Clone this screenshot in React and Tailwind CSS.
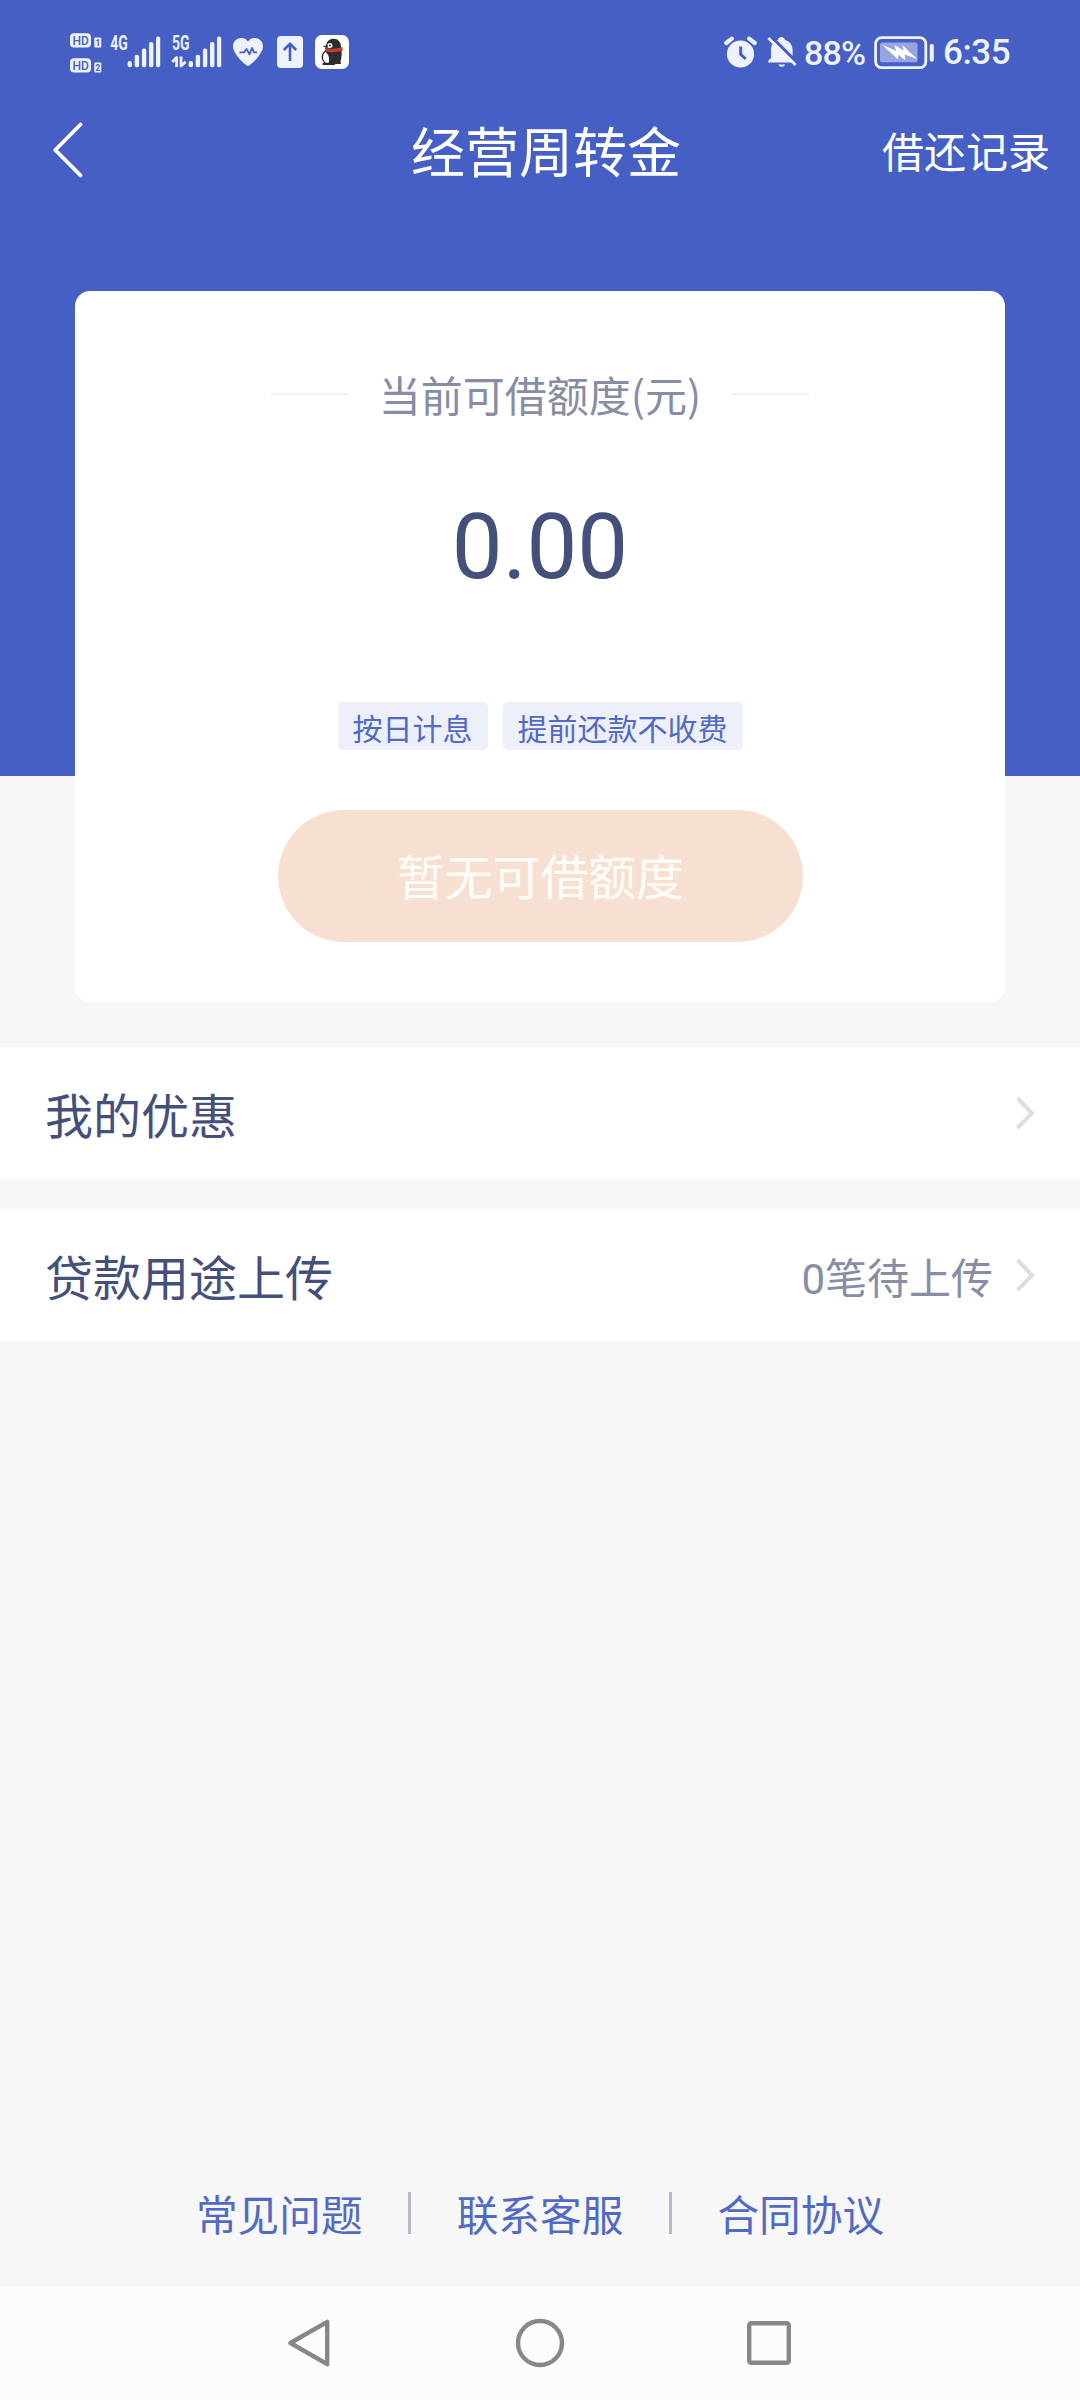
import React from "react";

const cjk = "font-['Noto_Sans_CJK_SC','Roboto',sans-serif]";

function HdBadge({ sim }) {
  return (
    <svg className="overflow-visible" width="32" height="15" viewBox="0 0 32 15">
      <rect x="0" y="0.3" width="21" height="14.2" rx="4" fill="#eef2ff" />
      <text x="2.4" y="12.2" fontFamily="Roboto" fontWeight="500" fontSize="13.6" textLength="16.4" lengthAdjust="spacingAndGlyphs" fill="#465fc4">HD</text>
      <rect x="24.3" y="4.6" width="7" height="9.9" rx="1" fill="#eef2ff" />
      <text x="25.4" y="12.9" fontFamily="Roboto" fontWeight="700" fontSize="9.5" textLength="4.8" lengthAdjust="spacingAndGlyphs" fill="#465fc4">{sim}</text>
    </svg>
  );
}

function Signal({ label, arrows }) {
  return (
    <svg className={arrows ? "ml-[11px] overflow-visible" : "ml-[8px] overflow-visible"} width="50" height="32" viewBox="0 0 50 32">
      <text x={arrows ? 1 : 0.3} y="14.4" fontFamily="Roboto" fontWeight="700" fontSize="19.5" textLength="17.5" lengthAdjust="spacingAndGlyphs" fill="#eef2ff">{label}</text>
      <g fill="#eef2ff">
        <rect x="17.6" y="25" width="4.4" height="6.3" rx="2" />
        <rect x="24.7" y="18.7" width="4.4" height="12.6" rx="2" />
        <rect x="31.9" y="12.4" width="4.4" height="18.9" rx="2" />
        <rect x="39" y="6" width="4.4" height="25.3" rx="2" />
        <rect x="46" y="0.6" width="4.2" height="30.7" rx="2" />
      </g>
      {arrows && (
        <path d="M1.3 26 L5.6 21.5 V31 M10 20.5 V30 L14.6 25.8" fill="none" stroke="#eef2ff" strokeWidth="2.8" strokeLinejoin="round" />
      )}
    </svg>
  );
}

function StatusBar() {
  return (
    <div className="flex h-[105px] items-start justify-between pl-[70px] pr-[70px] pt-[33px]">
      <div className="flex items-start">
        <div className="flex flex-col gap-[10px]">
          <HdBadge sim="1" />
          <HdBadge sim="2" />
        </div>
        <div className="flex items-start pt-[3px]">
          <Signal label="4G" />
          <Signal label="5G" arrows />
          <svg className="ml-[11px] mt-[1px]" width="32" height="30" viewBox="0 0 32 30">
            <path d="M16 29 C14 29 1 17 1 9.5 C1 0.5 12 -1.5 16 4.5 C20 -1.5 31 0.5 31 9.5 C31 17 18 29 16 29Z" fill="#eef2ff" />
            <path d="M7.5 15.3 H12.2 L14.5 12 L17.5 17.3 L20 11 L22 15.3 H25" fill="none" stroke="#465fc4" strokeWidth="1.8" strokeLinejoin="round" />
          </svg>
          <svg className="ml-[13px]" width="26" height="32" viewBox="0 0 26 32">
            <rect width="26" height="32" rx="4" fill="#eef2ff" />
            <path d="M13 25 V8.5 M6.8 14 L13 7.8 L19.2 14" fill="none" stroke="#465fc4" strokeWidth="2.6" />
          </svg>
          <svg className="ml-[12px] -mt-[1px]" width="34" height="34" viewBox="0 0 34 34">
            <rect width="34" height="34" rx="7" fill="#fff" />
            <path d="M11 11 C11.5 6 15 3.8 18.5 3.8 C23 3.8 26 7 26 12 C27 17 27 22 25.5 26.5 L26 29 H20.5 L19.5 30 H7.5 V28.5 L9 27.5 C5.5 24 6 19 10 15.5Z" fill="#2d2c30" />
            <path d="M10.3 17 C13 18.5 15.2 23 13.5 28 L10.5 27.5 C7.2 25 7.2 20 10.3 17Z" fill="#fff" />
            <path d="M11.5 12.5 C11.5 8.5 14.5 7 16.5 8.5 C18.5 10.5 17.5 12.8 15 13Z" fill="#fff" />
            <circle cx="14.8" cy="10.4" r="1" fill="#2d2c30" />
            <path d="M13 10 L7.7 11.3 L12.5 13Z" fill="#2d2c30" />
            <path d="M10 12.8 C16 14.3 22 13.6 27.3 12 L27.8 15.8 C22 17.3 16 17.6 10.5 16.6Z" fill="#c2402f" />
          </svg>
        </div>
      </div>

      <div className="flex items-start pt-[3px] text-[#eef2ff]">
        <svg width="33" height="32" viewBox="0 0 33 32">
          <circle cx="16.5" cy="18" r="13.6" fill="#eef2ff" />
          <path d="M2.3 7 L7.8 2.6 M30.7 7 L25.2 2.6" stroke="#eef2ff" strokeWidth="4.2" strokeLinecap="round" />
          <path d="M16.7 10.5 V18.3 L21.8 23" fill="none" stroke="#465fc4" strokeWidth="3" />
        </svg>
        <svg className="ml-[9px]" width="31" height="32" viewBox="0 0 31 32">
          <path d="M2.2 26.5 V24.8 L5 22 V14 C5 8 8.5 5 12 3.8 C12.2 0.1 18.6 0.1 18.8 3.8 C23.5 5.4 26.6 9 26.6 14 V22 L28.4 24.8 V26.5Z" fill="#eef2ff" />
          <path d="M12.4 28.6 H19 C18.5 31.6 13 31.6 12.4 28.6Z" fill="#eef2ff" />
          <path d="M5 0.5 L32 27.5" stroke="#465fc4" strokeWidth="3.2" />
          <path d="M0 0 H5 L2.4 3 L6.5 7 L2 14Z" fill="#465fc4" />
          <path d="M2.4 2 L29.6 29" stroke="#eef2ff" strokeWidth="2.8" />
        </svg>
        <span className="ml-[7px] w-[64px] whitespace-nowrap font-['Roboto',sans-serif] text-[34px] font-medium leading-[34px] tracking-[-0.8px]">88%</span>
        <svg className="ml-[6px]" width="61" height="34" viewBox="0 0 61 34">
          <rect x="1.6" y="1.7" width="50.2" height="30" rx="6" fill="none" stroke="#eef2ff" strokeWidth="2.8" />
          <rect x="6" y="6.6" width="37.5" height="19.6" rx="2" fill="#98a5e2" />
          <path d="M8 8.5 L22 15 L20.5 9 L29.5 14.5 L28.5 9 L35.5 16 L43.5 23 L30.5 18.5 L31.5 24.5 L24.5 18.8 L24 23.5Z" fill="#fff" />
          <rect x="55.8" y="8" width="4" height="17.5" rx="1.6" fill="#eef2ff" />
        </svg>
        <span className="ml-[8px] w-[67px] whitespace-nowrap font-['Roboto',sans-serif] text-[35px] font-medium leading-[34px] tracking-[-0.4px]">6:35</span>
      </div>
    </div>
  );
}

function NavBar() {
  return (
    <div className="grid h-[90px] grid-cols-[300px_1fr_300px] items-center text-white">
      <svg className="ml-[52px]" width="32" height="56" viewBox="0 0 32 56">
        <path d="M28.5 2.5 L3.3 28 L28.5 53.3" fill="none" stroke="currentColor" strokeWidth="3.8" strokeLinecap="round" strokeLinejoin="round" />
      </svg>
      <h1 className="pl-[12px] text-center text-[54px] font-normal leading-[88px]">经营周转金</h1>
      <span className="pr-[30px] text-right text-[42px] leading-[88px]">借还记录</span>
    </div>
  );
}

function Chip({ children }) {
  return (
    <span className="h-[48px] rounded-[5px] bg-[#edf0fb] px-[15px] text-[30px] leading-[50px] text-[#526ac4]">{children}</span>
  );
}

function QuotaCard() {
  return (
    <section className="mx-[75px] mt-[96px] flex h-[711px] flex-col items-center rounded-[15px] bg-white">
      <div className="mt-[72px] flex h-[62px] items-center justify-center gap-[30px]">
        <i className="h-[2px] w-[78px] bg-[#f2f2f4]" />
        <span className="text-[42px] leading-[62px] text-[#868da5]">当前可借额度(元)</span>
        <i className="h-[2px] w-[78px] bg-[#f2f2f4]" />
      </div>
      <div className="mt-[69px] h-[106px] font-['Roboto',sans-serif] text-[90.5px] leading-[106px] text-[#444f7c]">0.00</div>
      <div className="mt-[102px] flex gap-[15px]">
        <Chip>按日计息</Chip>
        <Chip>提前还款不收费</Chip>
      </div>
      <button className="mt-[60px] h-[132px] w-[525px] rounded-full bg-[#f7e0d2] pb-[2px] pl-[1px] text-[47.8px] leading-[130px] text-[#fffdf9]">暂无可借额度</button>
    </section>
  );
}

function Row({ title, value }) {
  return (
    <div className="flex h-[132px] items-center bg-white pl-[45px] pr-[44px]">
      <span className="flex-1 text-[48px] leading-[132px] text-[#444f7c]">{title}</span>
      {value && <span className="pt-[10px] font-['Roboto','Noto_Sans_CJK_SC',sans-serif] text-[42px] leading-[122px] text-[#868da5]">{value}</span>}
      <svg className="ml-[22px]" width="21" height="34" viewBox="0 0 21 34">
        <path d="M2.5 2 L17 17.3 L2.5 32" fill="none" stroke="#dcdde3" strokeWidth="4" />
      </svg>
    </div>
  );
}

function FooterLinks() {
  return (
    <div className="flex h-[62px] items-center justify-center text-[41.7px] leading-[62px] text-[#526ac4]">
      <span>常见问题</span>
      <i className="mx-[45.5px] h-[42px] w-[3px] bg-[#b3b8cb]" />
      <span>联系客服</span>
      <i className="mx-[45.5px] h-[42px] w-[3px] bg-[#b3b8cb]" />
      <span>合同协议</span>
    </div>
  );
}

function SystemNav() {
  return (
    <div className="flex h-[114px] items-center justify-center bg-[#fcfcfc]">
      <div className="flex items-center pb-[1px] pr-[3px]">
        <svg width="44" height="50" viewBox="0 0 44 50">
          <path d="M40.2 3.8 V46.2 L3.4 25Z" fill="none" stroke="#878787" strokeWidth="4.4" strokeLinejoin="round" />
        </svg>
        <svg className="ml-[184px]" width="50" height="50" viewBox="0 0 50 50">
          <circle cx="25" cy="25" r="22" fill="none" stroke="#878787" strokeWidth="4.4" />
        </svg>
        <svg className="ml-[182px]" width="44" height="44" viewBox="0 0 44 44">
          <rect x="2.2" y="2.2" width="39.6" height="39.6" rx="2.2" fill="none" stroke="#878787" strokeWidth="4.4" />
        </svg>
      </div>
    </div>
  );
}

export default function App() {
  return (
    <div className={`${cjk} flex h-[2400px] w-[1080px] flex-col overflow-hidden bg-[#f7f7f7]`}>
      <div className="h-[776px] shrink-0 bg-[#465fc4]">
        <StatusBar />
        <NavBar />
        <QuotaCard />
      </div>
      <div className="mt-[271px] flex flex-col gap-[30px]">
        <Row title="我的优惠" />
        <Row title="贷款用途上传" value="0笔待上传" />
      </div>
      <div className="mt-auto pb-[42px]">
        <FooterLinks />
      </div>
      <SystemNav />
    </div>
  );
}
